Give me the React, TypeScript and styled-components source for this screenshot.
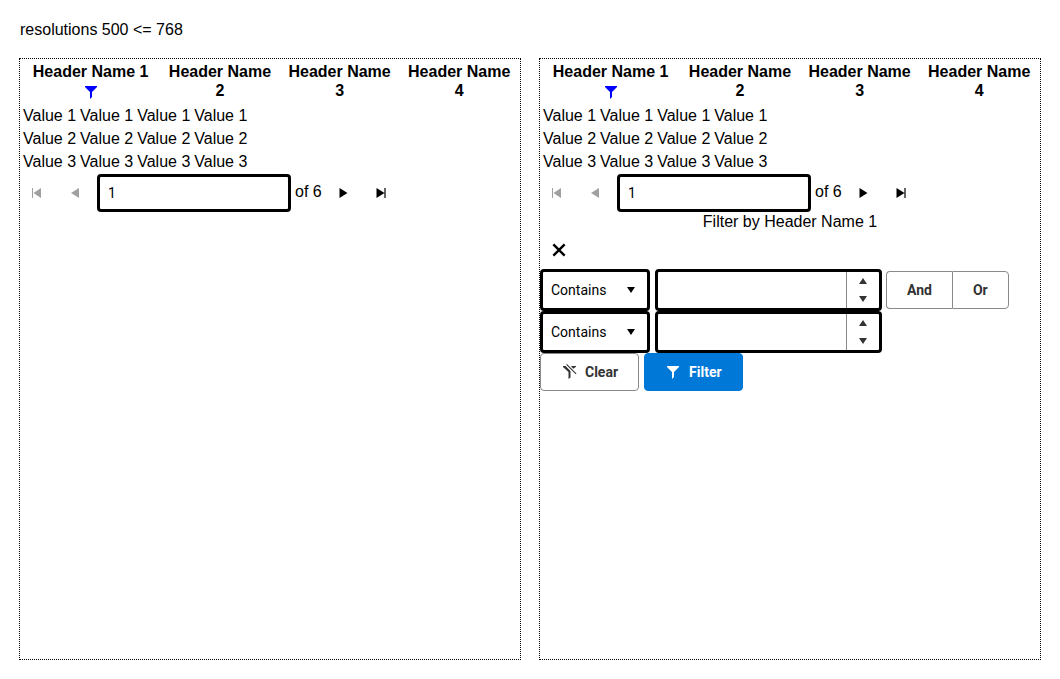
import React, { useState } from 'react';
import styled, { createGlobalStyle, css } from 'styled-components';

const GlobalStyle = createGlobalStyle`
  *, *::before, *::after { box-sizing: border-box; }
  body {
    margin: 0;
    background: #fff;
    color: #000;
    font: 16px/19px "Liberation Sans", Arial, sans-serif;
  }
  button, input, select { margin: 0; font: 14px/20px Roboto, sans-serif; }
`;

const Page = styled.main`
  padding: 20px 19px 19px;
`;

const Title = styled.p`
  margin: 0 0 19px;
  padding-left: 1px;
`;

const Panels = styled.div`
  display: grid;
  grid-template-columns: repeat(auto-fit, minmax(480px, 1fr));
  gap: 18px;
`;

const Panel = styled.section`
  min-height: 602px;
  border: 1px dotted #000;
`;

const Table = styled.table`
  display: block;
`;

const TableHead = styled.thead`
  display: table;
  width: 100%;
  border-spacing: 2px;
`;

const TableBody = styled.tbody`
  display: table;
  border-spacing: 2px;
`;

const HeaderCell = styled.th<{ $wide?: boolean }>`
  width: ${({ $wide }) => ($wide ? '28%' : '24%')};
  padding: 1px 4px;
  text-align: center;
  vertical-align: top;
`;

const Cell = styled.td`
  padding: 1px;
`;

const FilterLink = styled.a`
  display: flex;
  justify-content: center;
  color: #00f;
  padding-top: 3px;
`;

const IconBox = styled.svg`
  display: block;
  flex: none;
  width: 16px;
  height: 16px;
  overflow: visible;
  fill: currentColor;
`;

const Pager = styled.nav`
  display: flex;
  align-items: center;
  gap: 4px;
`;

const FlatButton = styled.button<{ $square?: boolean }>`
  display: flex;
  align-items: center;
  justify-content: center;
  width: ${({ $square }) => ($square ? '38px' : '34px')};
  height: 38px;
  padding: 0;
  border: 0;
  background: none;
  color: #000;
  &:disabled { color: #a0a0a0; }
`;

const boxed = css`
  border: 3px solid #000;
  border-radius: 4px;
  background: #fff;
  color: #000;
`;

const PageInput = styled.input`
  ${boxed}
  width: 194px;
  height: 38px;
  margin-left: 1px;
  padding: 0 8px;
`;

const PageCount = styled.span`
  padding-bottom: 3px;
`;

const FilterTitle = styled.div`
  text-align: center;
`;

const FilterRow = styled.div`
  display: flex;
  flex-wrap: wrap;
  align-items: center;
  gap: 4px;
`;

const DropDown = styled.div`
  position: relative;
  margin-right: 1px;
`;

const Select = styled.select`
  ${boxed}
  display: block;
  appearance: none;
  width: 110px;
  height: 42px;
  padding: 0 30px 0 8px;
`;

const DropDownArrow = styled(IconBox)`
  position: absolute;
  top: 13px;
  right: 11px;
  pointer-events: none;
`;

const Field = styled.div`
  ${boxed}
  display: flex;
  width: 227px;
  height: 42px;
`;

const FieldInput = styled.input`
  flex: 1;
  min-width: 0;
  padding: 0 8px;
  border: 0;
  background: none;
`;

const Spinner = styled.div`
  display: flex;
  flex-direction: column;
  width: 33px;
  border-left: 1px solid #8a8a8a;
`;

const SpinButton = styled.button`
  display: flex;
  flex: 1;
  align-items: center;
  justify-content: center;
  padding: 0;
  border: 0;
  background: none;
  color: #333;
`;

const ButtonGroup = styled.div`
  display: flex;
`;

const Button = styled.button<{ $primary?: boolean }>`
  display: flex;
  align-items: center;
  justify-content: center;
  gap: 8px;
  height: 38px;
  padding: 0 20px;
  border: 1px solid ${({ $primary }) => ($primary ? '#0078d7' : '#8a8a8a')};
  border-radius: 4px;
  background: ${({ $primary }) => ($primary ? '#0078d7' : '#fff')};
  color: ${({ $primary }) => ($primary ? '#fff' : '#333')};
  font-weight: 700;

  ${ButtonGroup} &:not(:last-child) {
    border-right: 0;
    border-radius: 4px 0 0 4px;
  }
  ${ButtonGroup} &:last-child {
    border-radius: 0 4px 4px 0;
  }
`;

const Actions = styled.div`
  display: flex;
  gap: 5px;
`;

const paths = {
  filter: 'M2 2v1l5 5v7l2-2V8l5-5V2z',
  filterClear: 'M2 2h2.500L9.500 7v6.500L7.500 15V8L2 3zM5.200 .8l.8-.8 9.500 9.500-.8.8zM10 2h5v.8L12.200 4.800z',
  first: 'M3 3h1v10H3zM12 3v10L4.500 8z',
  previous: 'M12 3v10L4 8z',
  next: 'M4.500 3v10l8-5z',
  last: 'M3.500 3v10l8-5zM11.400 3h1.200v10h-1.200z',
  down: 'M4 5h8l-4 6z',
  up: 'M4 11h8l-4-6z',
  close: 'M3.200 1.500L1.500 3.200 6.300 8l-4.800 4.800 1.700 1.700L8 9.700l4.800 4.800 1.700-1.700L9.700 8l4.800-4.800-1.700-1.700L8 6.300z',
};

const Icon = ({ name }: { name: keyof typeof paths }) => (
  <IconBox viewBox="0 0 16 16" aria-hidden="true">
    <path d={paths[name]} />
  </IconBox>
);

const columns = [1, 2, 3, 4];
const rows = [1, 2, 3];

const Grid = () => {
  const [page, setPage] = useState('1');
  return (
    <>
      <Table>
        <TableHead>
          <tr>
            {columns.map((n) => (
              <HeaderCell key={n} $wide={n === 1}>
                Header Name {n}
                {n === 1 && (
                  <FilterLink href="#filter" aria-label="Filter by Header Name 1">
                    <Icon name="filter" />
                  </FilterLink>
                )}
              </HeaderCell>
            ))}
          </tr>
        </TableHead>
        <TableBody>
          {rows.map((row) => (
            <tr key={row}>
              {columns.map((n) => (
                <Cell key={n}>Value {row}</Cell>
              ))}
            </tr>
          ))}
        </TableBody>
      </Table>
      <Pager aria-label="Pages">
        <FlatButton disabled aria-label="First page"><Icon name="first" /></FlatButton>
        <FlatButton disabled aria-label="Previous page"><Icon name="previous" /></FlatButton>
        <PageInput aria-label="Page" value={page} onChange={(e) => setPage(e.target.value)} />
        <PageCount>of 6</PageCount>
        <FlatButton aria-label="Next page"><Icon name="next" /></FlatButton>
        <FlatButton aria-label="Last page"><Icon name="last" /></FlatButton>
      </Pager>
    </>
  );
};

const Condition = ({ label, children }: { label: string; children?: React.ReactNode }) => (
  <FilterRow>
    <DropDown>
      <Select aria-label={`${label} operator`}>
        <option>Contains</option>
      </Select>
      <DropDownArrow viewBox="0 0 16 16" aria-hidden="true">
        <path d={paths.down} />
      </DropDownArrow>
    </DropDown>
    <Field>
      <FieldInput aria-label={`${label} value`} />
      <Spinner>
        <SpinButton aria-label="Increase"><Icon name="up" /></SpinButton>
        <SpinButton aria-label="Decrease"><Icon name="down" /></SpinButton>
      </Spinner>
    </Field>
    {children}
  </FilterRow>
);

export default function App() {
  return (
    <>
      <GlobalStyle />
      <Page>
        <Title>resolutions 500 &lt;= 768</Title>
        <Panels>
          <Panel>
            <Grid />
          </Panel>
          <Panel>
            <Grid />
            <FilterTitle>Filter by Header Name 1</FilterTitle>
            <FlatButton $square aria-label="Close"><Icon name="close" /></FlatButton>
            <Condition label="First">
              <ButtonGroup>
                <Button>And</Button>
                <Button>Or</Button>
              </ButtonGroup>
            </Condition>
            <Condition label="Second" />
            <Actions>
              <Button><Icon name="filterClear" />Clear</Button>
              <Button $primary><Icon name="filter" />Filter</Button>
            </Actions>
          </Panel>
        </Panels>
      </Page>
    </>
  );
}
